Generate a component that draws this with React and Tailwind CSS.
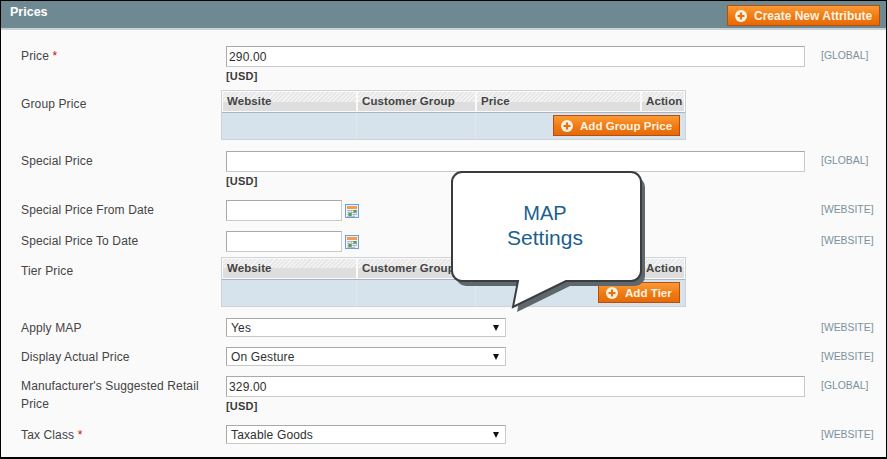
const font = { fontFamily: '"Liberation Sans", Arial, sans-serif' };

const PlusIcon = () => (
  <svg width="12" height="12" viewBox="0 0 12 12" className="shrink-0">
    <circle cx="6" cy="6" r="6" fill="#fff3e4" />
    <path d="M6 2.5v7M2.5 6h7" stroke="#e8700f" strokeWidth="2.2" />
  </svg>
);

const OrangeButton = ({ children, className = "" }) => (
  <button className={`flex h-[21px] shrink-0 items-center gap-[7px] whitespace-nowrap border border-[#b4500f] bg-[linear-gradient(#fb9a36,#f07a12_55%,#e76a08)] pl-[7px] font-bold text-[#fff4e6] ${className}`}>
    <PlusIcon />
    <span>{children}</span>
  </button>
);

const CalendarIcon = () => (
  <svg width="14" height="14" viewBox="0 0 14 14" className="ml-[3px] shrink-0">
    <rect x="0.5" y="0.5" width="13" height="13" fill="#eef3fa" stroke="#6f9bd8" />
    <rect x="2" y="2" width="10" height="3" fill="#f59a4e" />
    <path d="M2 6.5h10M2 8.5h10M2 10.5h10M2 12.5h8M4 6v7M6.5 6v7M9 6v7M11.5 6v5" stroke="#a9b4c2" strokeWidth="0.8" />
    <rect x="8.5" y="6" width="3" height="2.5" fill="#55a04a" />
    <rect x="3.5" y="9" width="3" height="3" fill="#55a04a" />
  </svg>
);

const TextBox = ({ value = "", className = "" }) => (
  <input
    readOnly
    value={value}
    style={font}
    className={`block h-[21px] border border-t-[#a9a9a9] border-l-[#a9a9a9] border-r-[#c9c9c9] border-b-[#c9c9c9] bg-white px-[2px] text-[12px] tracking-[0.15px] text-[#2f2f2f] outline-none ${className}`}
  />
);

const SelectBox = ({ value }) => (
  <div className="flex h-[19px] w-[280px] items-center justify-between border border-t-[#a9a9a9] border-l-[#a9a9a9] border-r-[#c9c9c9] border-b-[#c9c9c9] bg-white pl-[4px] pr-[6px] text-[12px] tracking-[0.15px] text-[#2f2f2f]">
    <span>{value}</span>
    <svg width="6" height="6" viewBox="0 0 6 6"><path d="M0 0h6L3 6z" fill="#111" /></svg>
  </div>
);

const Usd = () => <div className="mt-[3px] h-[12px] text-[11px] font-bold leading-[12px] tracking-[0.2px] text-[#3a3a3a]">[USD]</div>;

const Row = ({ label, required, scope, top, labelPad = "pt-[1px]", children }) => (
  <div className={`flex items-start ${top}`}>
    <div className={`w-[225px] shrink-0 pl-[20px] pr-[24px] text-[12px] leading-[18px] tracking-[0.13px] text-[#444] ${labelPad}`}>
      {label}
      {required && <span className="text-[#d40707]"> *</span>}
    </div>
    <div className="w-[595px] shrink-0">{children}</div>
    <div className="pt-[3px] text-[10.4px] leading-[13px] text-[#7d919c]">{scope}</div>
  </div>
);

const PriceTable = ({ button }) => {
  const cols = [
    ["Website", "w-[135px]"],
    ["Customer Group", "w-[119px]"],
    ["Price", "w-[165px]"],
    ["Action", "w-[44px]"],
  ];
  return (
    <div className="-ml-[5px] w-[465px] border border-[#d0d3d5] bg-[#d7e3ec]">
      <div className="flex h-[22px] border-b border-b-[#a9b6c2]">
        {cols.map(([name, w]) => (
          <div
            key={name}
            className={`${w} flex h-full items-center border border-[#fafafa] bg-[linear-gradient(transparent_50%,#dedede_50%),repeating-linear-gradient(135deg,#f3f3f3_0_1.5px,#e6e6e6_1.5px_3px)] pl-[4px] text-[11.5px] font-bold tracking-[0.1px] text-[#444]`}
          >
            {name}
          </div>
        ))}
      </div>
      <div className="flex h-[26px]">
        <div className="w-[135px] border-r border-r-[#e1e8ee]" />
        <div className="w-[119px] border-r border-r-[#e1e8ee]" />
        <div className="flex flex-1 items-start justify-end pr-[5px] pt-[2px]">{button}</div>
      </div>
    </div>
  );
};

export default function App() {
  return (
    <div style={font} className="relative h-[459px] w-[887px] overflow-hidden border border-b-2 border-black bg-[#fafafa]">
      <div className="flex h-[29px] items-start justify-between border-b-2 border-b-[#c8d2d6] bg-[#6f8992] pl-[9px] pr-[6px]">
        <div className="pt-[3px] text-[12.5px] font-bold leading-[16px] text-white">Prices</div>
        <OrangeButton className="mt-[4px] w-[153px] text-[12px]">Create New Attribute</OrangeButton>
      </div>

      <Row label="Price" required scope="[GLOBAL]" top="mt-[16px]">
        <TextBox value="290.00" className="w-[579px]" />
        <Usd />
      </Row>
      <Row label="Group Price" labelPad="pt-[5px]" top="mt-[8px]">
        <PriceTable button={<OrangeButton className="w-[127px] text-[11.6px]">Add Group Price</OrangeButton>} />
      </Row>
      <Row label="Special Price" scope="[GLOBAL]" top="mt-[11px]">
        <TextBox className="w-[579px]" />
        <Usd />
      </Row>
      <Row label="Special Price From Date" scope="[WEBSITE]" top="mt-[13px]">
        <div className="flex items-center"><TextBox className="w-[116px]" /><CalendarIcon /></div>
      </Row>
      <Row label="Special Price To Date" scope="[WEBSITE]" top="mt-[10px]">
        <div className="flex items-center"><TextBox className="w-[116px]" /><CalendarIcon /></div>
      </Row>
      <Row label="Tier Price" labelPad="pt-[5px]" top="mt-[5px]">
        <PriceTable button={<OrangeButton className="w-[82px] text-[11.6px]">Add Tier</OrangeButton>} />
      </Row>
      <Row label="Apply MAP" scope="[WEBSITE]" top="mt-[11px]">
        <SelectBox value="Yes" />
      </Row>
      <Row label="Display Actual Price" scope="[WEBSITE]" top="mt-[10px]">
        <SelectBox value="On Gesture" />
      </Row>
      <Row label="Manufacturer's Suggested Retail Price" scope="[GLOBAL]" top="mt-[10px]">
        <TextBox value="329.00" className="w-[579px]" />
        <Usd />
      </Row>
      <Row label="Tax Class" required scope="[WEBSITE]" top="mt-[12px]">
        <SelectBox value="Taxable Goods" />
      </Row>

      {/* callout sits over the tier table */}
      <svg width="210" height="150" viewBox="0 0 210 150" className="absolute left-[443px] top-[163px]">
        <path
          transform="translate(4 5)"
          d="M18 8H187a10 10 0 0 1 10 10V107a10 10 0 0 1-10 10H122L69 143l5-26H18a10 10 0 0 1-10-10V18a10 10 0 0 1 10-10z"
          fill="#5d676c"
        />
        <path
          d="M18 8H187a10 10 0 0 1 10 10V107a10 10 0 0 1-10 10H122L69 143l5-26H18a10 10 0 0 1-10-10V18a10 10 0 0 1 10-10z"
          fill="#fff"
          stroke="#3a3d3f"
          strokeWidth="2"
        />
      </svg>
      <div className="absolute left-[449px] top-[200px] w-[190px] text-center text-[#1c5f8c]">
        <div className="text-[20px] leading-[24px]">MAP</div>
        <div className="text-[21px] leading-[25px]">Settings</div>
      </div>
    </div>
  );
}
